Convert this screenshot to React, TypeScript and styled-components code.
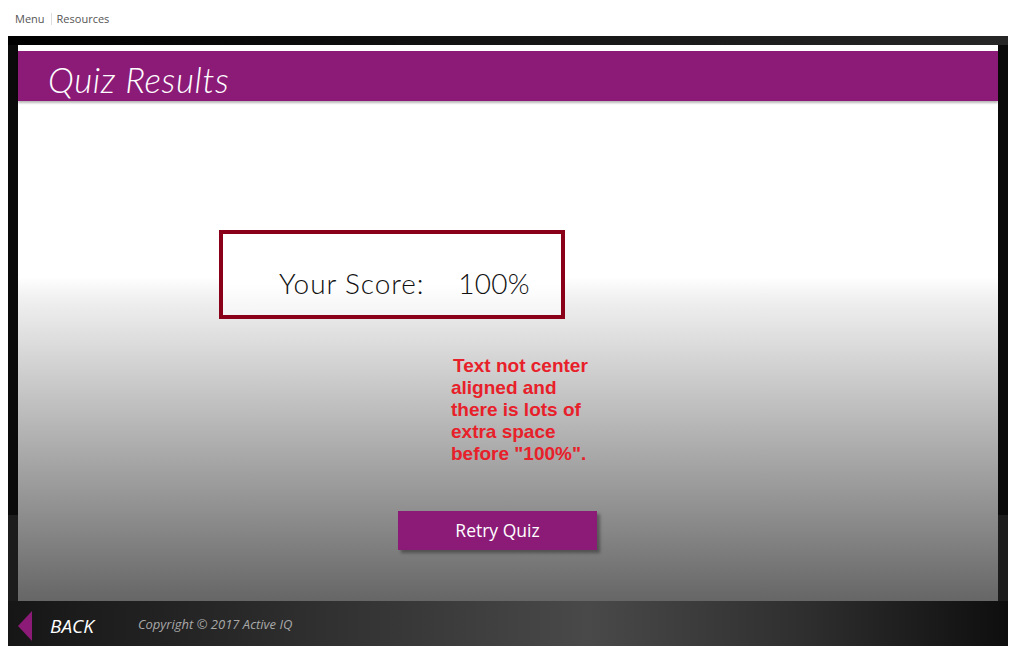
import { FC } from 'react';
import styled, { createGlobalStyle } from 'styled-components';

const GlobalStyle = createGlobalStyle`
  body {
    margin: 0;
    background: #fff;
    font-family: 'Liberation Sans', Arial, sans-serif;
  }
`;

const Page = styled.div`
  width: 1013px;
  height: 650px;
  overflow: hidden;
`;

const TopNav = styled.nav`
  display: flex;
  align-items: center;
  height: 36px;
  padding: 3px 0 0 15px;
  box-sizing: border-box;
  font-family: 'Open Sans', 'Liberation Sans', sans-serif;
  font-size: 11px;
  color: #555;
`;

const NavItem = styled.span`
  padding-bottom: 3px;
`;

const NavDivider = styled.span`
  width: 1px;
  height: 12px;
  background: #ddd;
  margin: 0 5px 2px 6px;
`;

const Frame = styled.div`
  width: 1000px;
  height: 610px;
  margin-left: 8px;
  display: flex;
  flex-direction: column;
  background: linear-gradient(180deg, #0a0a0a 0, #0a0a0a 479px, #1c1c1c 479px);
`;

const TopStrip = styled.div`
  height: 9px;
  flex: none;
  background: linear-gradient(90deg, #000 0%, #181818 60%, #262626 100%);
`;

const Stage = styled.div`
  flex: 1;
  margin: 0 10px;
  display: flex;
  flex-direction: column;
  background: #fff;
  padding-top: 6px;
`;

const Header = styled.header`
  height: 50px;
  flex: none;
  background: #8b1b77;
  box-shadow: 0 2px 2px rgba(0, 0, 0, 0.28);
  display: flex;
  align-items: center;
  padding-left: 30px;
  position: relative;
  z-index: 1;
`;

const Title = styled.h1`
  margin: 6px 0 0 0;
  font-family: 'Lato', 'DejaVu Sans', sans-serif;
  font-weight: 300;
  font-style: italic;
  font-size: 35px;
  color: #fff;
  letter-spacing: 0.6px;
`;

const Content = styled.main`
  flex: 1;
  display: flex;
  flex-direction: column;
  align-items: flex-start;
  background: linear-gradient(180deg, #fff 0, #fff 176px, #f1f1f1 196px, #666 100%);
`;

const ScoreBox = styled.div`
  margin: 129px 0 0 201px;
  width: 346px;
  height: 89px;
  box-sizing: border-box;
  border: 4px solid #8b0019;
  display: flex;
  align-items: flex-end;
  padding: 0 0 15px 56px;
  gap: 34px;
  font-family: 'Lato', 'DejaVu Sans', sans-serif;
  font-weight: 300;
  font-size: 28px;
  letter-spacing: 0.9px;
  color: #111;
  background: linear-gradient(180deg, #fff 0, #fff 50px, #f4f4f4 100%);
`;

const ScoreLabel = styled.span``;

const ScoreValue = styled.span`
  letter-spacing: 0.2px;
`;

const Note = styled.p`
  margin: 36px 0 0 433px;
  width: 146px;
  text-indent: 2px;
  font-family: 'Liberation Sans', Arial, sans-serif;
  font-weight: 700;
  font-size: 19px;
  line-height: 22px;
  color: #e8202a;
`;

const RetryButton = styled.button`
  margin: 46px 0 0 380px;
  width: 199px;
  height: 39px;
  border: none;
  background: #8b1b77;
  color: #fff;
  font-family: 'Open Sans', 'Liberation Sans', sans-serif;
  font-size: 17.5px;
  box-shadow: 3px 3px 3px rgba(0, 0, 0, 0.35);
  cursor: pointer;
  padding: 0 0 2px 0;
`;

const Footer = styled.footer`
  height: 45px;
  flex: none;
  display: flex;
  align-items: center;
  padding-left: 10px;
  background: linear-gradient(90deg, #161616 0%, #2a2a2a 25%, #494949 58%, #2e2e2e 80%, #0e0e0e 100%);
`;

const BackArrow = styled.div`
  width: 0;
  height: 0;
  border-top: 15px solid transparent;
  border-bottom: 15px solid transparent;
  border-right: 14px solid #8b1b77;
  margin: 4px 18px 0 0;
`;

const BackLabel = styled.span`
  font-family: 'Open Sans', 'Liberation Sans', sans-serif;
  font-style: italic;
  font-size: 19px;
  color: #fff;
  margin-top: 4px;
`;

const Copyright = styled.span`
  font-family: 'Open Sans', 'Liberation Sans', sans-serif;
  font-style: italic;
  font-size: 13px;
  color: #a8a8a8;
  margin-left: 44px;
`;

const App: FC = () => {
  return (
    <Page>
      <GlobalStyle />
      <TopNav>
        <NavItem>Menu</NavItem>
        <NavDivider />
        <NavItem>Resources</NavItem>
      </TopNav>
      <Frame>
        <TopStrip />
        <Stage>
          <Header>
            <Title>Quiz Results</Title>
          </Header>
          <Content>
            <ScoreBox>
              <ScoreLabel>Your Score:</ScoreLabel>
              <ScoreValue>100%</ScoreValue>
            </ScoreBox>
            <Note>
              Text not center aligned and there is lots of extra space before "100%".
            </Note>
            <RetryButton>Retry Quiz</RetryButton>
          </Content>
        </Stage>
        <Footer>
          <BackArrow />
          <BackLabel>BACK</BackLabel>
          <Copyright>Copyright © 2017 Active IQ</Copyright>
        </Footer>
      </Frame>
    </Page>
  );
};

export default App;
